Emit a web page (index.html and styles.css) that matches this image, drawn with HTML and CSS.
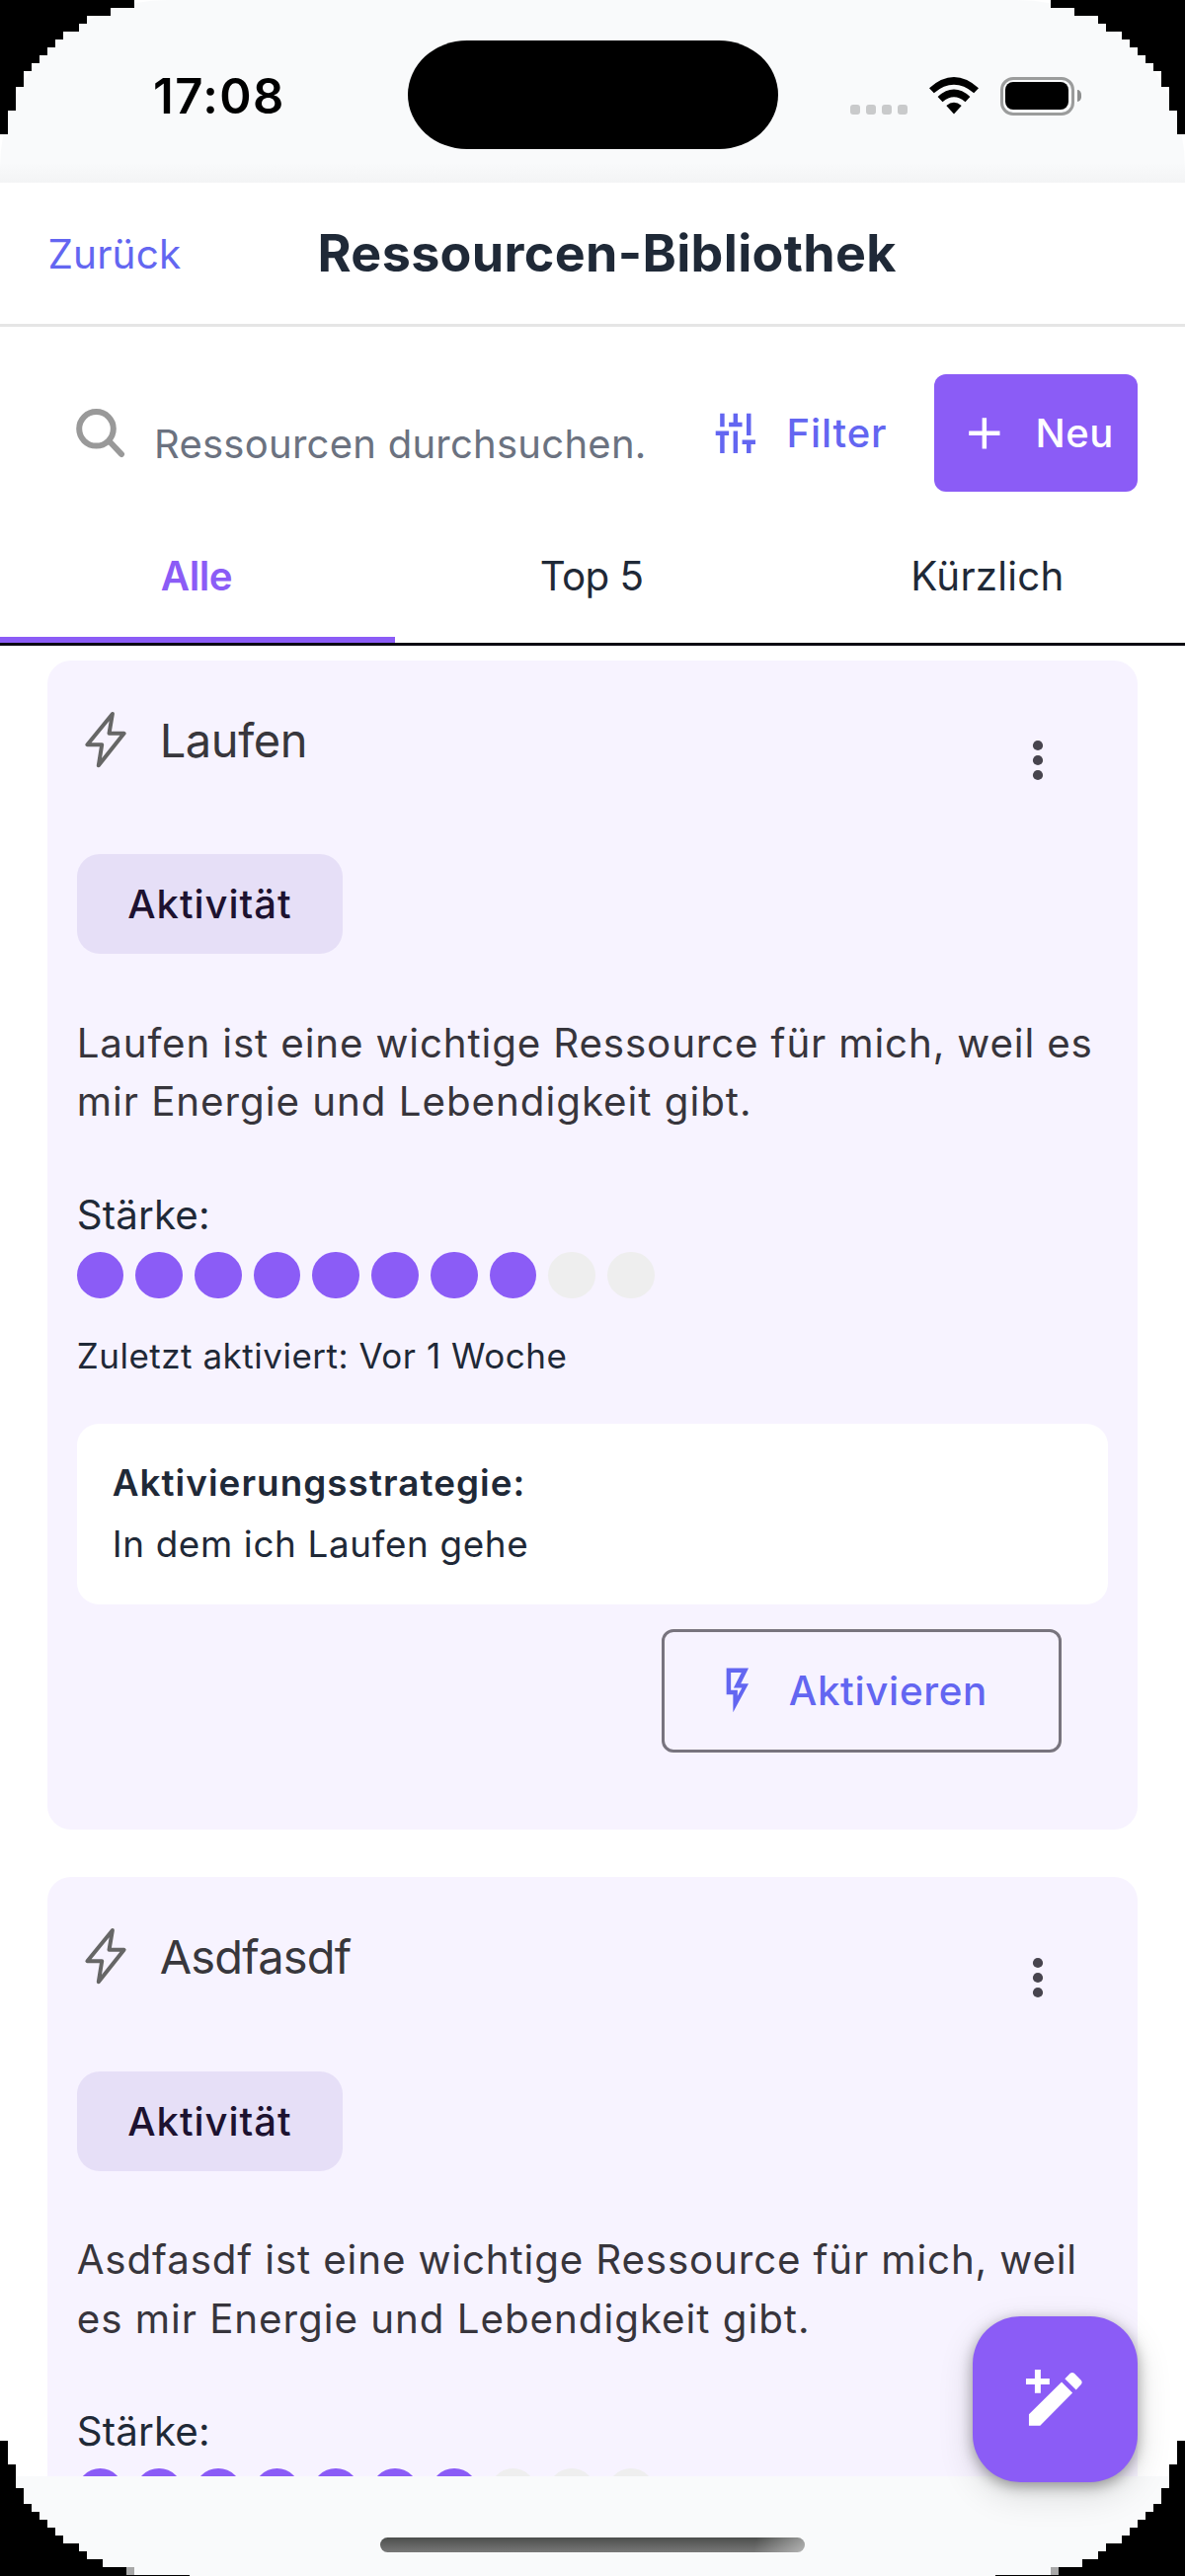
FILE: index.html
```
<!DOCTYPE html>
<html lang="de">
<head>
<meta charset="utf-8">
<title>Ressourcen-Bibliothek</title>
<link rel="stylesheet" href="styles.css">
</head>
<body>
<div class="phone">
  <div class="statusbar">
    <div class="statusbar-inner">
      <span class="clock">17:08</span>
      <span class="island"></span>
      <span class="signal"><i></i><i></i><i></i><i></i></span>
      <svg class="wifi" width="50" height="38" viewBox="0 0 50 38">
        <path d="M0 11.2Q25-11.200 50 11.200L45.200 16.200Q25-.5 4.800 16.200Z"/>
        <path d="M8.600 20Q25 5.200 41.400 20L36.500 25.200Q25 15.200 13.500 25.200Z"/>
        <path d="M17.300 29Q25 22.600 32.700 29L25 37.600Z"/>
      </svg>
      <span class="battery"><span class="battery-body"><i></i></span><span class="battery-nub"></span></span>
    </div>
  </div>

  <header class="header">
    <a class="back">Zurück</a>
    <h1>Ressourcen-Bibliothek</h1>
  </header>

  <div class="toolbar">
    <div class="search">
      <svg width="50" height="50" viewBox="0 0 50 50"><circle cx="20.500" cy="20.300" r="17.300"/><path d="M34 33.300L46 46"/></svg>
      <span>Ressourcen durchsuchen.</span>
    </div>
    <button class="filter">
      <svg class="mdi" viewBox="0 0 24 24"><path d="M5 3h2v6H5zM3 11h6v2H7v8H5v-8H3zM11 3h2v4h2v2H9V7h2zM11 11h2v10h-2zM17 3h2v10h-2zM15 15h6v2h-2v4h-2v-4h-2z"/></svg>
      <span>Filter</span>
    </button>
    <button class="new">
      <svg class="mdi" viewBox="0 0 24 24"><path d="M19 13H13V19H11V13H5V11H11V5H13V11H19V13Z"/></svg>
      <span>Neu</span>
    </button>
  </div>

  <nav class="tabs">
    <a class="tab active">Alle</a>
    <a class="tab top">Top 5</a>
    <a class="tab">Kürzlich</a>
  </nav>

  <main class="list">
    <article class="card">
      <div class="card-head">
        <svg class="bolt" width="72" height="64" viewBox="0 0 72 64"><path d="M36.900 6L11.400 37.300H26.200L22.800 58.200L48.600 25.800H33.500Z"/></svg>
        <h2>Laufen</h2>
        <svg class="kebab" width="12" height="42" viewBox="0 0 12 42"><circle cx="6" cy="6" r="5.100"/><circle cx="6" cy="21" r="5.100"/><circle cx="6" cy="36" r="5.100"/></svg>
      </div>
      <span class="chip">Aktivität</span>
      <p class="desc">Laufen ist eine wichtige Ressource für mich, weil es<br><span class="wide">mir Energie und Lebendigkeit gibt.</span></p>
      <div class="label">Stärke:</div>
      <div class="rating"><i class="on"></i><i class="on"></i><i class="on"></i><i class="on"></i><i class="on"></i><i class="on"></i><i class="on"></i><i class="on"></i><i></i><i></i></div>
      <div class="last">Zuletzt aktiviert: Vor 1 Woche</div>
      <div class="strategy">
        <strong>Aktivierungsstrategie:</strong>
        <span>In dem ich Laufen gehe</span>
      </div>
      <button class="activate">
        <svg class="mdi" viewBox="0 0 24 24"><path d="M7 2H17L13.500 9H17L10 22V14H7V2M9 4V12H12V14.660L14 11H10.240L13.760 4H9Z"/></svg>
        <span>Aktivieren</span>
      </button>
    </article>

    <article class="card">
      <div class="card-head">
        <svg class="bolt" width="72" height="64" viewBox="0 0 72 64"><path d="M36.900 6L11.400 37.300H26.200L22.800 58.200L48.600 25.800H33.500Z"/></svg>
        <h2 class="tight">Asdfasdf</h2>
        <svg class="kebab" width="12" height="42" viewBox="0 0 12 42"><circle cx="6" cy="6" r="5.100"/><circle cx="6" cy="21" r="5.100"/><circle cx="6" cy="36" r="5.100"/></svg>
      </div>
      <span class="chip">Aktivität</span>
      <p class="desc">Asdfasdf ist eine wichtige Ressource für mich, weil<br><span class="wide">es mir Energie und Lebendigkeit gibt.</span></p>
      <div class="label">Stärke:</div>
      <div class="rating"><i class="on"></i><i class="on"></i><i class="on"></i><i class="on"></i><i class="on"></i><i class="on"></i><i class="on"></i><i></i><i></i><i></i></div>
    </article>
  </main>

  <footer class="homebar"><span></span></footer>

  <button class="fab">
    <svg width="71.600" height="71.600" viewBox="0 0 24 24"><path d="M20.700 7C21.100 6.600 21.100 6 20.700 5.600L18.400 3.300C18 2.900 17.400 2.900 17 3.300L15.200 5.100L19 8.900M3 17.200V21H6.800L17.800 9.900L14.100 6.200L3 17.200M7 2V5H10V7H7V10H5V7H2V5H5V2H7Z"/></svg>
  </button>

  <svg class="corners" width="1200" height="2609" viewBox="0 0 1200 2609" shape-rendering="crispEdges">
    <defs>
      <path id="ct" d="M0 0H136V8H112V16H88V24H80V32H64V40H56V48H48V56H40V64H32V72H24V88H16V112H8V136H0Z"/>
      <path id="cb" d="M0 2472H8V2496H16V2520H24V2536H32V2544H40V2552H48V2560H56V2568H64V2576H80V2584H88V2592H104V2600H128V2608H192V2609H0Z"/>
    </defs>
    <use href="#ct"/><use href="#cb"/>
    <g transform="translate(1200 0) scale(-1 1)"><use href="#ct"/><use href="#cb"/></g>
    <path d="M128 2600h8v8h-8zM1064 2600h8v8h-8z" fill="#a9a9a9"/>
  </svg>
</div>
</body>
</html>
```

FILE: styles.css
```
* { box-sizing: border-box; }
body { margin: 0; background: #fff; }
h1, h2, p { margin: 0; font-weight: 400; }
button { border: 0; background: none; padding: 0; margin: 0; font: inherit; }
svg { display: block; flex: none; }

.phone {
  position: relative;
  width: 1200px;
  height: 2609px;
  overflow: hidden;
  display: flex;
  flex-direction: column;
  background: #fff;
  color: #1f2937;
  font-family: "Inter", "Liberation Sans", sans-serif;
  font-size: 40.3px;
  white-space: nowrap;
}

/* Status bar */
.statusbar {
  flex: none;
  height: 185px;
  border-radius: 170px 170px 0 0;
  background: linear-gradient(#f9fafb 165px, #f3f4f5 185px);
}
.statusbar-inner {
  height: 151px;
  padding: 41px 105px 0 155px;
  display: flex;
  align-items: center;
}
.clock { width: 258px; margin-top: 4px; font-size: 49px; font-weight: 600; letter-spacing: 1.440px; line-height: 60px; color: #000; }
.island { width: 374.500px; height: 110px; border-radius: 60px / 55px; background: #000; }
.signal { display: flex; gap: 6px; margin: 29px 22px 0 73px; }
.signal i { width: 10px; height: 10px; border-radius: 3px; background: #c9cacb; }
.wifi { margin-top: 2px; fill: #000; }
.battery { display: flex; align-items: center; gap: 3px; margin: 2px 0 0 22px; }
.battery-body { width: 75px; height: 39px; padding: 2.500px; border: 3px solid #9b9c9c; border-radius: 13px; }
.battery-body i { display: block; height: 28px; border-radius: 8px; background: #000; }
.battery-nub { width: 4.500px; height: 12px; border-radius: 0 5px 5px 0 / 0 6px 6px 0; background: #8e8f8f; }

/* Title bar */
.header {
  flex: none;
  height: 146px;
  padding-left: 48.500px;
  border-bottom: 3px solid #e5e5e5;
  display: flex;
  align-items: center;
}
.back { width: 273px; padding-top: 1px; font-size: 40.500px; letter-spacing: .15px; color: #6366f1; }
.header h1 { font-size: 52px; font-weight: 700; letter-spacing: .34px; }

/* Search and actions */
.toolbar {
  flex: none;
  height: 185px;
  padding: 48px 48px 0 77px;
  display: flex;
  align-items: flex-start;
  font-size: 40px;
}
.search { width: 641.400px; height: 119px; display: flex; align-items: center; gap: 29px; color: #6b7280; letter-spacing: .26px; }
.search svg { fill: none; stroke: #999; stroke-width: 6; stroke-linecap: round; }
.search span { padding-top: 22px; }
.mdi { width: 53.700px; height: 53.700px; fill: currentColor; }
.filter, .new { height: 119px; display: flex; align-items: center; gap: 24.500px; font-weight: 500; }
.filter { width: 228px; color: #6366f1; letter-spacing: .91px; }
.new { width: 205.700px; padding-left: 24px; border-radius: 12px; background: #8b5cf6; color: #fff; letter-spacing: .53px; }

/* Tabs */
.tabs { flex: none; height: 138px; display: grid; grid-template-columns: repeat(3, 400px); border-bottom: 3px solid #0b0a12; }
.tab { padding-top: 6px; border-bottom: 6px solid transparent; display: flex; align-items: center; justify-content: center; letter-spacing: .24px; }
.tab.top { padding-right: 2px; letter-spacing: -.56px; }
.tab.active { padding-right: 2px; font-weight: 600; letter-spacing: -.45px; color: #8b5cf6; border-bottom-color: #8b5cf6; }

/* Resource cards */
.list { flex: none; height: 1854px; padding: 14.500px 48px 0; overflow: hidden; }
.card { height: 1184px; margin-bottom: 48.500px; padding: 0 29.700px; border-radius: 24px; background: #f7f3ff; display: flex; flex-direction: column; align-items: flex-start; }
.card-head { align-self: stretch; height: 161px; margin-bottom: 35.500px; display: flex; align-items: center; }
.card-head h2 { flex: 1; padding-left: 12px; font-size: 47px; letter-spacing: -.42px; color: #38373c; }
.card-head h2.tight { letter-spacing: -.8px; }
.bolt { margin: -1px 1px 0 -1px; fill: none; stroke: #666; stroke-width: 4; stroke-linejoin: round; }
.kebab { margin: 42px 65.500px 0 0; fill: #47444e; }
.chip { width: 269.500px; height: 101px; padding-left: 51.600px; border-radius: 23px; background: #e6dff7; color: #1d1230; font-size: 40px; font-weight: 500; letter-spacing: .95px; line-height: 101px; }
.desc { margin-top: 60.500px; line-height: 59.700px; letter-spacing: .86px; color: #37353c; }
.desc .wide { letter-spacing: .97px; }
.label { margin-top: 54.700px; line-height: 60px; letter-spacing: .16px; }
.rating { margin-top: 7.200px; display: flex; gap: 12px; }
.rating i { width: 47.700px; height: 47.700px; border-radius: 50%; background: #eee; }
.rating i.on { background: #8b5cf6; }
.last { margin: 33.500px 0 .7px; font-size: 35px; line-height: 48px; letter-spacing: .51px; }
.strategy { align-self: stretch; height: 183.600px; margin-top: 44.200px; padding: 30.500px 36px 0; border-radius: 22px; background: #fff; font-size: 36.800px; line-height: 60px; display: flex; flex-direction: column; gap: 1.700px; letter-spacing: .66px; }
.strategy strong { font-weight: 600; letter-spacing: 1.060px; }
.activate { align-self: flex-end; width: 405px; height: 125px; margin: 24.400px 47.800px 0 0; padding-left: 47.700px; border: 3px solid #78747e; border-radius: 12px; display: flex; align-items: center; gap: 24.800px; font-weight: 500; letter-spacing: .66px; color: #6366f1; }

/* Home indicator */
.homebar { flex: 1; padding-top: 62px; border-radius: 0 0 170px 170px / 0 0 150px 150px; background: #f9fafb; display: flex; justify-content: center; }
.homebar span { width: 430px; height: 15px; border-radius: 7.500px; background: linear-gradient(100deg, transparent 88%, rgba(255, 255, 255, .45)), linear-gradient(#4c4e4c, #787878); }

/* Overlays */
.fab { position: absolute; left: 985px; top: 2346px; width: 167px; height: 168px; border-radius: 48px; background: #8b5cf6; display: flex; align-items: center; justify-content: center; box-shadow: 0 4px 14px rgba(0, 0, 0, .34), 0 12px 36px rgba(0, 0, 0, .14); }
.fab svg { fill: #fff; }
.corners { position: absolute; left: 0; top: 0; }
```
